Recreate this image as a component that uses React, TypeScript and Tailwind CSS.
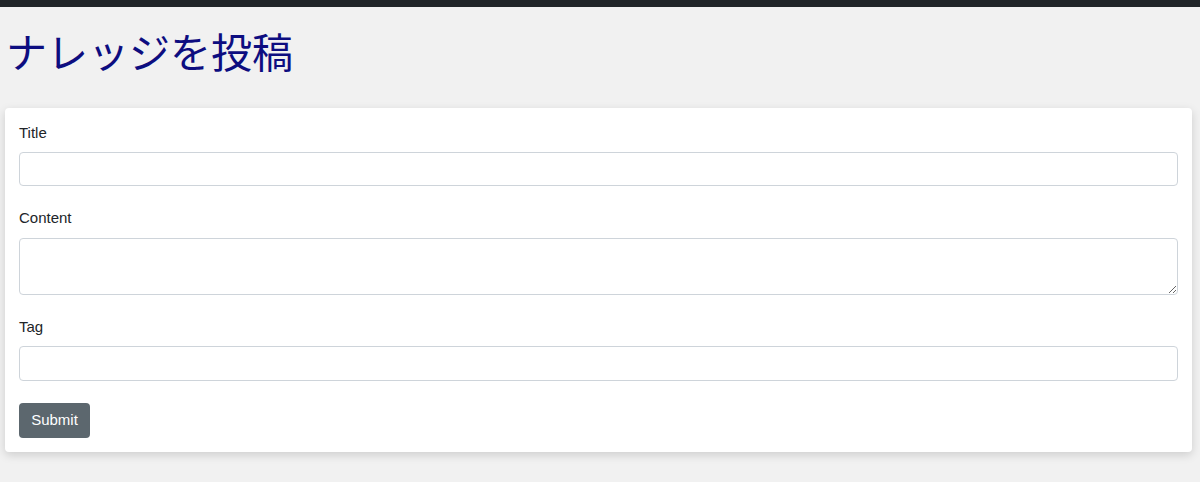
export default function App() {
  return (
    <div className="min-h-[482px] bg-[#f1f1f1] font-['Liberation_Sans',sans-serif] text-[#212529]">
      <div className="h-[7px] bg-[#212529]" />

      <h1 className="pl-[6px] pt-[19px] pb-[34px] text-[41px] leading-[48px] text-[#0d0d80] font-normal font-['Noto_Sans_CJK_JP',sans-serif]">
        ナレッジを投稿
      </h1>

      <div className="mx-[5px] w-[1187px] rounded bg-white p-[14px] shadow-[0_3px_10px_rgba(0,0,0,0.15)]">
        <form className="flex flex-col" onSubmit={(e) => e.preventDefault()}>
          <label className="mb-[9px] text-[15px] leading-[21px]">Title</label>
          <input
            type="text"
            className="mb-[21px] h-[34px] w-full rounded border border-[#ced4da] px-3 text-[15px] outline-none"
          />

          <label className="mb-[10px] text-[15px] leading-[21px]">Content</label>
          <textarea
            className="mb-[21px] h-[57px] w-full rounded border border-[#ced4da] px-3 py-1 text-[15px] outline-none"
          />

          <label className="mb-[9px] text-[15px] leading-[21px]">Tag</label>
          <input
            type="text"
            className="mb-[22px] h-[35px] w-full rounded border border-[#ced4da] px-3 text-[15px] outline-none"
          />

          <div>
            <button
              type="submit"
              className="h-[35px] w-[71px] rounded bg-[#5c676e] text-[15px] text-white"
            >
              Submit
            </button>
          </div>
        </form>
      </div>
    </div>
  );
}
